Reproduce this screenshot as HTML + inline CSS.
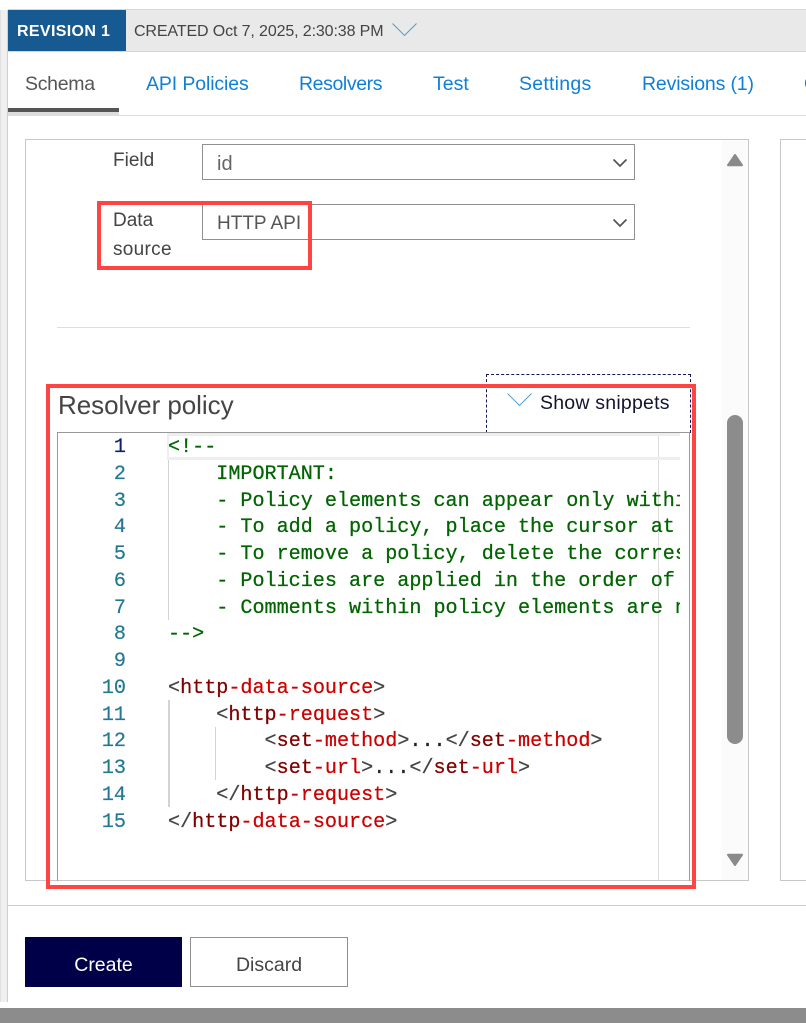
<!DOCTYPE html>
<html lang="en">
<head>
<meta charset="utf-8">
<title>Resolver policy</title>
<style>
html,body{margin:0;padding:0;background:#fff;}
#p{position:relative;width:806px;height:1023px;overflow:hidden;background:#fff;font-family:"Liberation Sans",sans-serif;color:#444;}
#p div,#p span.a,#p svg{position:absolute;}
.t{position:absolute;white-space:pre;line-height:24px;height:24px;}
.tab{font-size:19.5px;color:#0f7fd8;top:72px;}
.n{position:absolute;left:70px;width:56px;text-align:right;color:#237893;font:20.13px/27px "Liberation Mono",monospace;height:27px;-webkit-text-stroke:.2px;}
.c{position:absolute;left:168px;white-space:pre;font:20.13px/27px "Liberation Mono",monospace;height:27px;color:#006400;-webkit-text-stroke:.25px;}
.d{color:#444}
.k{color:#800000}
.r{color:#cc0000}
.x{color:#222}
</style>
</head>
<body>
<div id="p">
  <!-- left band -->
  <div style="left:0;top:10px;width:1px;height:992px;background:#e0e0e0"></div>
  <div style="left:1px;top:10px;width:6px;height:992px;background:#f0f0f0"></div>
  <div style="left:7px;top:10px;width:1px;height:992px;background:#cfcfcf"></div>

  <!-- header -->
  <div style="left:8px;top:9px;width:798px;height:1px;background:#d6d6d6"></div>
  <div style="left:8px;top:10px;width:798px;height:41px;background:#e9e9e9"></div>
  <div style="left:8px;top:51px;width:798px;height:1px;background:#d6d6d6"></div>
  <div style="left:8px;top:10px;width:118px;height:41px;background:#175a92"></div>
  <span class="t" style="left:17px;top:20px;font-size:16px;font-weight:bold;color:#fff;letter-spacing:.35px">REVISION 1</span>
  <span class="t" style="left:134px;top:20px;font-size:16px;color:#444;letter-spacing:-.12px">CREATED Oct 7, 2025, 2:30:38 PM</span>
  <svg style="left:392px;top:23px" width="26" height="14" viewBox="0 0 26 14"><path d="M0.5 0.5L12.5 12.5L24.5 0.5" fill="none" stroke="#4a96d2" stroke-width=".9"/></svg>

  <!-- tabs -->
  <span class="t tab" style="left:25px;color:#555;letter-spacing:-.3px">Schema</span>
  <span class="t tab" style="left:146px;letter-spacing:-.12px">API Policies</span>
  <span class="t tab" style="left:299px;letter-spacing:-.4px">Resolvers</span>
  <span class="t tab" style="left:433px">Test</span>
  <span class="t tab" style="left:519px;letter-spacing:.25px">Settings</span>
  <span class="t tab" style="left:642px;letter-spacing:-.15px">Revisions (1)</span>
  <span class="t tab" style="left:804px;color:#0f7fd8">O</span>
  <div style="left:8px;top:108px;width:111px;height:4px;background:#555"></div>
  <div style="left:8px;top:112px;width:111px;height:3px;background:#ddd"></div>
  <div style="left:8px;top:115px;width:798px;height:1px;background:#ddd"></div>

  <!-- outer panels -->
  <div style="left:25px;top:139px;width:722px;height:740px;border:1px solid #c8c8c8;"></div>
  <div style="left:722px;top:140px;width:26px;height:740px;background:#fbfbfb"></div>
  <div style="left:780px;top:139px;width:40px;height:740px;border:1px solid #c8c8c8;"></div>

  <!-- scrollbar -->
  <svg style="left:727px;top:153px" width="16" height="14" viewBox="0 0 16 14"><path d="M8 2L15 12.2H1Z" fill="#8a8a8a" stroke="#8a8a8a" stroke-width="2" stroke-linejoin="round"/></svg>
  <div style="left:727px;top:415px;width:16px;height:329px;background:#8c8c8c;border-radius:8px"></div>
  <svg style="left:727px;top:853px" width="16" height="14" viewBox="0 0 16 14"><path d="M1 1.8H15L8 12Z" fill="#8a8a8a" stroke="#8a8a8a" stroke-width="2" stroke-linejoin="round"/></svg>

  <!-- form -->
  <span class="t" style="left:113px;top:149px;font-size:19px;color:#444">Field</span>
  <div style="left:202px;top:144px;width:431px;height:34px;border:1px solid #8f8f8f;"></div>
  <span class="t" style="left:217px;top:152px;font-size:20px;color:#666">id</span>
  <svg style="left:612px;top:158px" width="16" height="10" viewBox="0 0 16 10"><path d="M1.5 1.5L8 8L14.5 1.5" fill="none" stroke="#555" stroke-width="1.7"/></svg>

  <span class="t" style="left:113px;top:209px;font-size:19px;color:#444">Data</span>
  <span class="t" style="left:113px;top:238px;font-size:19px;letter-spacing:.3px;color:#444">source</span>
  <div style="left:202px;top:204px;width:431px;height:34px;border:1px solid #8f8f8f;"></div>
  <span class="t" style="left:217px;top:212px;font-size:19px;color:#555">HTTP API</span>
  <svg style="left:612px;top:218px" width="16" height="10" viewBox="0 0 16 10"><path d="M1.5 1.5L8 8L14.5 1.5" fill="none" stroke="#555" stroke-width="1.7"/></svg>

  <div style="left:57px;top:327px;width:633px;height:1px;background:#dedede"></div>

  <!-- resolver policy heading -->
  <span class="t" style="left:58px;top:392px;font-size:26px;letter-spacing:-.05px;line-height:26px;height:26px;color:#444">Resolver policy</span>

  <!-- show snippets -->
  <div style="left:486px;top:374px;width:203px;height:58px;border:1px dashed #14145c;border-bottom:0"></div>
  <svg style="left:507px;top:393px" width="26" height="14" viewBox="0 0 26 14"><path d="M0.5 0.5L12.5 12.5L24.5 0.5" fill="none" stroke="#4a96d2" stroke-width=".9"/></svg>
  <span class="t" style="left:540px;top:391px;font-size:19.5px;letter-spacing:.22px;color:#14142e">Show snippets</span>

  <!-- editor -->
  <div style="left:57px;top:432px;width:631px;height:448px;border:1px solid #999;border-bottom:0"></div>
  <div style="left:658px;top:433px;width:1px;height:447px;background:#dcdcdc"></div>
  <div style="left:168px;top:433px;width:512px;height:3px;background:#eee"></div>
  <div style="left:168px;top:457px;width:512px;height:3px;background:#eee"></div>
  <div style="left:167px;top:433px;width:2px;height:27px;background:#eee"></div>
  <div style="left:168px;top:460px;width:1px;height:160px;background:#d3d3d3"></div>
  <div style="left:168px;top:700px;width:2px;height:107px;background:#d3d3d3"></div>
  <div style="left:215px;top:727px;width:1px;height:53px;background:#d3d3d3"></div>

  <span class="n" style="top:434px;color:#0b216f">1</span>
  <span class="n" style="top:461px">2</span>
  <span class="n" style="top:488px">3</span>
  <span class="n" style="top:514px">4</span>
  <span class="n" style="top:541px">5</span>
  <span class="n" style="top:568px">6</span>
  <span class="n" style="top:595px">7</span>
  <span class="n" style="top:621px">8</span>
  <span class="n" style="top:648px">9</span>
  <span class="n" style="top:675px">10</span>
  <span class="n" style="top:702px">11</span>
  <span class="n" style="top:728px">12</span>
  <span class="n" style="top:755px">13</span>
  <span class="n" style="top:782px">14</span>
  <span class="n" style="top:809px">15</span>

  <div style="left:168px;top:434px;width:512px;height:410px;overflow:hidden">
    <span class="c" style="left:0;top:0">&lt;!--</span>
    <span class="c" style="left:0;top:27px">    IMPORTANT:</span>
    <span class="c" style="left:0;top:54px">    - Policy elements can appear only within the</span>
    <span class="c" style="left:0;top:80px">    - To add a policy, place the cursor at the</span>
    <span class="c" style="left:0;top:107px">    - To remove a policy, delete the corresponding</span>
    <span class="c" style="left:0;top:134px">    - Policies are applied in the order of their</span>
    <span class="c" style="left:0;top:161px">    - Comments within policy elements are not</span>
    <span class="c" style="left:0;top:187px">--&gt;</span>
    <span class="c" style="left:0;top:241px"><span class="d">&lt;</span><span class="k">http</span><span class="r">-data-source</span><span class="d">&gt;</span></span>
    <span class="c" style="left:0;top:268px">    <span class="d">&lt;</span><span class="k">http</span><span class="r">-request</span><span class="d">&gt;</span></span>
    <span class="c" style="left:0;top:294px">        <span class="d">&lt;</span><span class="k">set</span><span class="r">-method</span><span class="d">&gt;</span><span class="x">...</span><span class="d">&lt;/</span><span class="k">set</span><span class="r">-method</span><span class="d">&gt;</span></span>
    <span class="c" style="left:0;top:321px">        <span class="d">&lt;</span><span class="k">set</span><span class="r">-url</span><span class="d">&gt;</span><span class="x">...</span><span class="d">&lt;/</span><span class="k">set</span><span class="r">-url</span><span class="d">&gt;</span></span>
    <span class="c" style="left:0;top:348px">    <span class="d">&lt;/</span><span class="k">http</span><span class="r">-request</span><span class="d">&gt;</span></span>
    <span class="c" style="left:0;top:375px"><span class="d">&lt;/</span><span class="k">http</span><span class="r">-data-source</span><span class="d">&gt;</span></span>
  </div>

  <!-- red annotations -->
  <div style="left:97px;top:201px;width:207px;height:61px;border:4px solid #ff4444;"></div>
  <div style="left:46px;top:384px;width:642px;height:497px;border:4px solid #ff4444;"></div>

  <!-- footer -->
  <div style="left:8px;top:905px;width:798px;height:1px;background:#ccc"></div>
  <div style="left:25px;top:937px;width:157px;height:50px;background:#000048"></div>
  <span class="t" style="left:25px;top:953px;width:157px;text-align:center;font-size:19.5px;color:#fff">Create</span>
  <div style="left:190px;top:937px;width:156px;height:48px;border:1px solid #8f8f8f;"></div>
  <span class="t" style="left:190px;top:953px;width:158px;text-align:center;font-size:19.5px;color:#444">Discard</span>

  <div style="left:0;top:1008px;width:806px;height:15px;background:#8c8c8c"></div>
</div>
</body>
</html>
